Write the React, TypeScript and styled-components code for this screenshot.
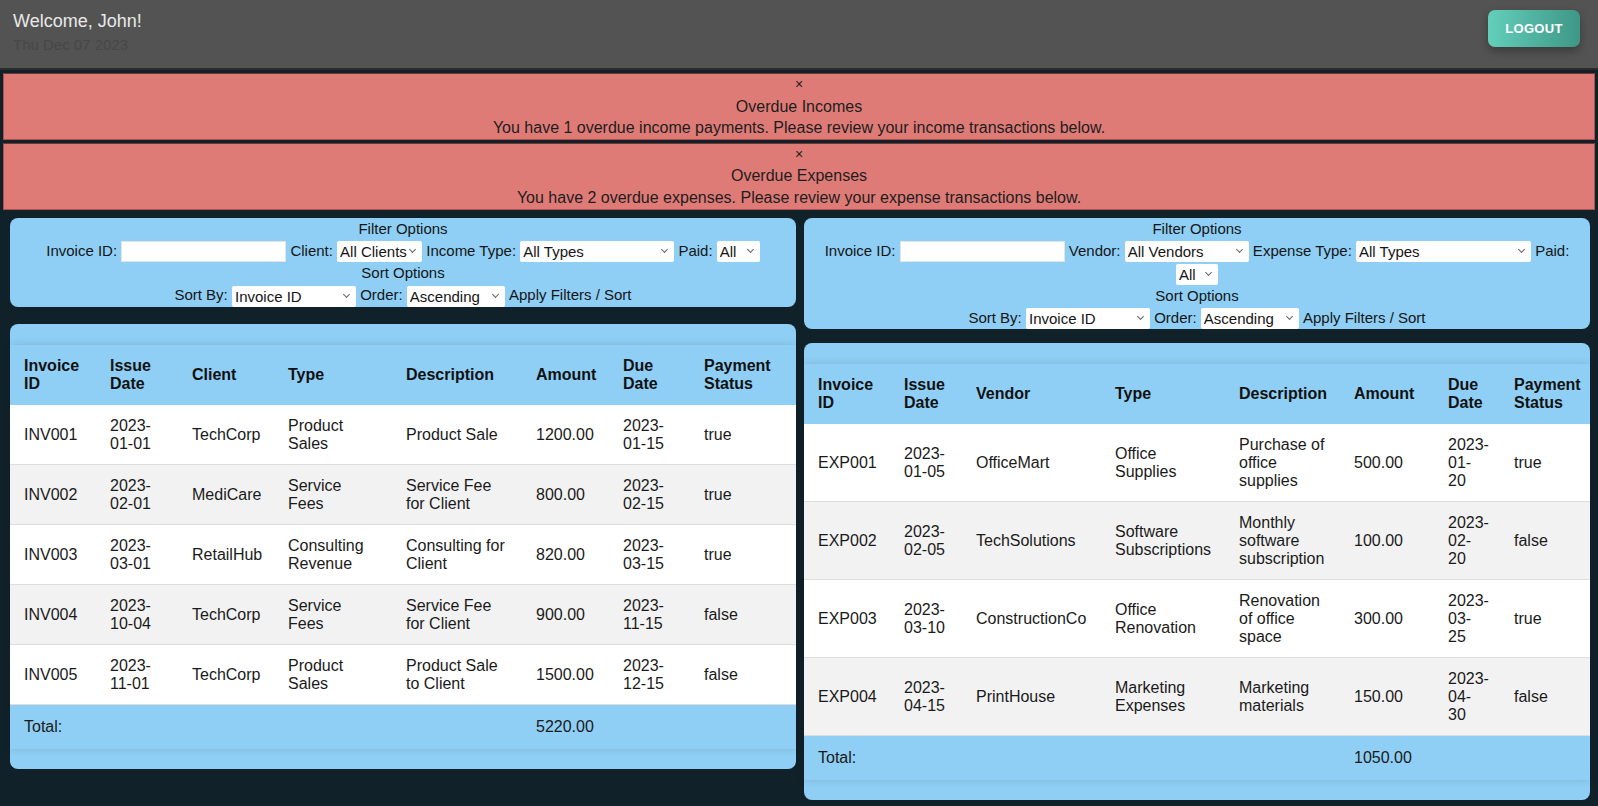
import styled, { createGlobalStyle } from "styled-components";

const GlobalStyle = createGlobalStyle`
  * {
    box-sizing: border-box;
  }
  body {
    margin: 0;
    background: #11212a;
    font-family: "Liberation Sans", Arial, sans-serif;
    color: #1c1c1c;
  }
`;

const Header = styled.header`
  height: 70px;
  background: #535353;
  border-bottom: 2px solid #2c2c2c;
  display: flex;
  justify-content: space-between;
  align-items: flex-start;
  padding: 10px 18px 0 13px;
`;

const Welcome = styled.div`
  font-size: 18px;
  line-height: 21px;
  margin-top: 1px;
  color: #e9e9e9;
`;

const DateText = styled.div`
  font-size: 15px;
  line-height: 17px;
  margin-top: 4px;
  color: #474747;
`;

const LogoutBtn = styled.button`
  width: 92px;
  height: 37px;
  border: none;
  border-radius: 7px;
  background: linear-gradient(90deg, #63cfba, #3e9787);
  box-shadow: 0 4px 9px rgba(0, 0, 0, 0.3);
  color: #fff;
  font-family: "Liberation Sans", Arial, sans-serif;
  font-size: 13px;
  font-weight: 700;
  letter-spacing: 0.3px;
`;

const Alerts = styled.div`
  padding: 0 3px;
  margin-top: 3px;
`;

const Alert = styled.div`
  background: #df7b77;
  border: 1px solid #a9524f;
  border-top-color: #6e3533;
  margin-bottom: 3px;
  text-align: center;
  font-size: 16px;
  line-height: 21.6px;
  color: #1d1d1d;
  padding: 0;
`;

const Close = styled.div`
  font-size: 14px;
`;

const Main = styled.main`
  display: grid;
  grid-template-columns: 1fr 1fr;
  gap: 8px;
  padding: 5px 8px 20px 10px;
  align-items: start;
`;

const Column = styled.section<{ $gap: number }>`
  display: flex;
  flex-direction: column;
  gap: ${(p) => p.$gap}px;
`;

const FilterPanel = styled.div`
  background: #8fcff5;
  border-radius: 8px;
  text-align: center;
  font-size: 15px;
  line-height: 22px;
  color: #151515;
`;

const Line = styled.div``;

const Input = styled.input`
  width: 165px;
  height: 21px;
  border: 1px solid #e4e4e4;
  background: #fff;
  vertical-align: middle;
  padding: 0 3px;
`;

const SelectWrap = styled.span`
  position: relative;
  display: inline-block;
  vertical-align: middle;
  &::after {
    content: "";
    position: absolute;
    right: 7px;
    top: 6px;
    width: 4px;
    height: 4px;
    border-right: 1px solid #666;
    border-bottom: 1px solid #666;
    transform: rotate(45deg);
    pointer-events: none;
  }
`;

const Select = styled.select<{ $w: number }>`
  appearance: none;
  display: block;
  width: ${(p) => p.$w}px;
  height: 21px;
  border: none;
  border-radius: 2px;
  background: #fff;
  font-family: "Liberation Sans", Arial, sans-serif;
  font-size: 15px;
  color: #151515;
  padding: 0 14px 0 3px;
`;

const ApplyBtn = styled.button`
  border: none;
  background: none;
  padding: 0;
  font-family: "Liberation Sans", Arial, sans-serif;
  font-size: 15px;
  color: #151515;
`;

const TablePanel = styled.div`
  background: #8fcff5;
  border-radius: 8px;
  padding: 21px 0 20px;
`;

const Table = styled.table`
  width: 100%;
  table-layout: fixed;
  border-collapse: collapse;
  font-size: 16px;
  line-height: 18px;
  box-shadow: 0 0 8px rgba(0, 0, 0, 0.13);
`;

const Th = styled.th`
  text-align: left;
  font-weight: 700;
  padding: 12px 14px;
  color: #111;
  background: #8fcff5;
`;

const Row = styled.tr<{ $alt: boolean }>`
  background: ${(p) => (p.$alt ? "#f2f2f2" : "#ffffff")};
  border-bottom: 1px solid #dedede;
`;

const Td = styled.td`
  padding: 12px 14px 11px;
  color: #1a1a1a;
  vertical-align: middle;
`;

const TotalRow = styled.tr`
  background: #8fcff5;
  & > td {
    padding: 13px 14px;
  }
`;

type Col = { title: string; w: number };

const incomeCols: Col[] = [
  { title: "Invoice ID", w: 86 },
  { title: "Issue Date", w: 82 },
  { title: "Client", w: 96 },
  { title: "Type", w: 118 },
  { title: "Description", w: 130 },
  { title: "Amount", w: 87 },
  { title: "Due Date", w: 81 },
  { title: "Payment Status", w: 106 },
];

const expenseCols: Col[] = [
  { title: "Invoice ID", w: 86 },
  { title: "Issue Date", w: 72 },
  { title: "Vendor", w: 139 },
  { title: "Type", w: 124 },
  { title: "Description", w: 115 },
  { title: "Amount", w: 94 },
  { title: "Due Date", w: 66 },
  { title: "Payment Status", w: 90 },
];

const incomes = [
  ["INV001", "2023-01-01", "TechCorp", "Product Sales", "Product Sale", "1200.00", "2023-01-15", "true"],
  ["INV002", "2023-02-01", "MediCare", "Service Fees", "Service Fee for Client", "800.00", "2023-02-15", "true"],
  ["INV003", "2023-03-01", "RetailHub", "Consulting Revenue", "Consulting for Client", "820.00", "2023-03-15", "true"],
  ["INV004", "2023-10-04", "TechCorp", "Service Fees", "Service Fee for Client", "900.00", "2023-11-15", "false"],
  ["INV005", "2023-11-01", "TechCorp", "Product Sales", "Product Sale to Client", "1500.00", "2023-12-15", "false"],
];

const expenses = [
  ["EXP001", "2023-01-05", "OfficeMart", "Office Supplies", "Purchase of office supplies", "500.00", "2023-01-20", "true"],
  ["EXP002", "2023-02-05", "TechSolutions", "Software Subscriptions", "Monthly software subscription", "100.00", "2023-02-20", "false"],
  ["EXP003", "2023-03-10", "ConstructionCo", "Office Renovation", "Renovation of office space", "300.00", "2023-03-25", "true"],
  ["EXP004", "2023-04-15", "PrintHouse", "Marketing Expenses", "Marketing materials", "150.00", "2023-04-30", "false"],
];

const Dropdown = ({ w, label }: { w: number; label: string }) => (
  <SelectWrap>
    <Select $w={w} defaultValue={label}>
      <option>{label}</option>
    </Select>
  </SelectWrap>
);

const DataTable = ({ cols, rows, total }: { cols: Col[]; rows: string[][]; total: string }) => (
  <TablePanel>
    <Table>
      <colgroup>
        {cols.map((c) => (
          <col key={c.title} style={{ width: c.w }} />
        ))}
      </colgroup>
      <thead>
        <tr>
          {cols.map((c) => (
            <Th key={c.title}>{c.title}</Th>
          ))}
        </tr>
      </thead>
      <tbody>
        {rows.map((r, i) => (
          <Row key={r[0]} $alt={i % 2 === 1}>
            {r.map((cell, j) => (
              <Td key={j}>{cell}</Td>
            ))}
          </Row>
        ))}
        <TotalRow>
          <Td colSpan={5}>Total:</Td>
          <Td>{total}</Td>
          <Td />
          <Td />
        </TotalRow>
      </tbody>
    </Table>
  </TablePanel>
);

const App = () => {
  return (
    <>
      <GlobalStyle />
      <Header>
        <div>
          <Welcome>Welcome, John!</Welcome>
          <DateText>Thu Dec 07 2023</DateText>
        </div>
        <LogoutBtn>LOGOUT</LogoutBtn>
      </Header>
      <Alerts>
        <Alert>
          <Close>×</Close>
          <div>Overdue Incomes</div>
          <div>You have 1 overdue income payments. Please review your income transactions below.</div>
        </Alert>
        <Alert>
          <Close>×</Close>
          <div>Overdue Expenses</div>
          <div>You have 2 overdue expenses. Please review your expense transactions below.</div>
        </Alert>
      </Alerts>
      <Main>
        <Column $gap={17}>
          <FilterPanel>
            <Line>Filter Options</Line>
            <Line>
              Invoice ID: <Input /> Client: <Dropdown w={85} label="All Clients" /> Income Type:{" "}
              <Dropdown w={154} label="All Types" /> Paid: <Dropdown w={43} label="All" />
            </Line>
            <Line>Sort Options</Line>
            <Line>
              Sort By: <Dropdown w={124} label="Invoice ID" /> Order: <Dropdown w={98} label="Ascending" />{" "}
              <ApplyBtn>Apply Filters / Sort</ApplyBtn>
            </Line>
          </FilterPanel>
          <DataTable cols={incomeCols} rows={incomes} total="5220.00" />
        </Column>
        <Column $gap={14}>
          <FilterPanel>
            <Line>Filter Options</Line>
            <Line>
              Invoice ID: <Input /> Vendor: <Dropdown w={124} label="All Vendors" /> Expense Type:{" "}
              <Dropdown w={175} label="All Types" /> Paid: <Dropdown w={42} label="All" />
            </Line>
            <Line>Sort Options</Line>
            <Line>
              Sort By: <Dropdown w={124} label="Invoice ID" /> Order: <Dropdown w={98} label="Ascending" />{" "}
              <ApplyBtn>Apply Filters / Sort</ApplyBtn>
            </Line>
          </FilterPanel>
          <DataTable cols={expenseCols} rows={expenses} total="1050.00" />
        </Column>
      </Main>
    </>
  );
};

export default App;
